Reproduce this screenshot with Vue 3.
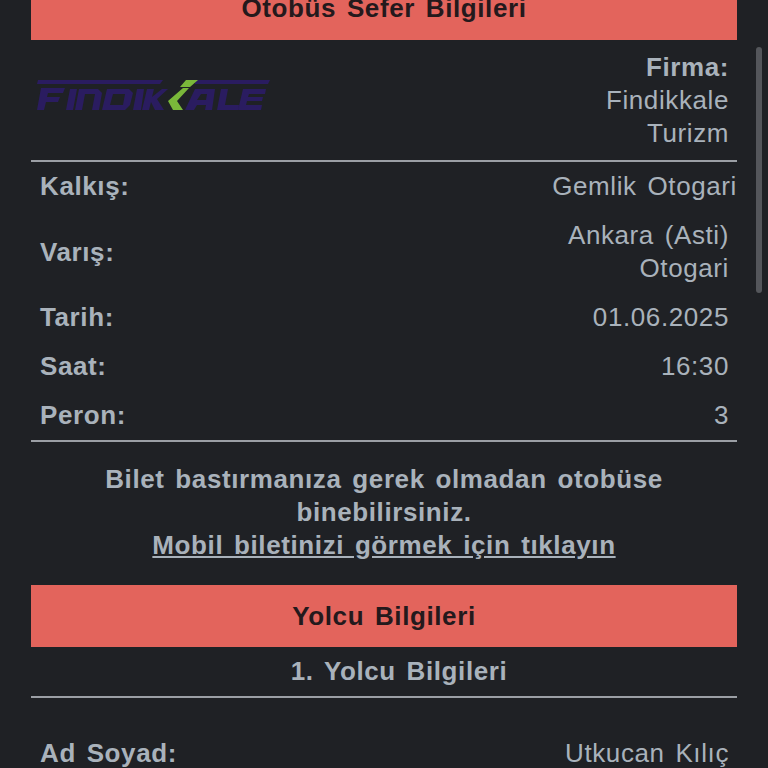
<script setup>
const rows = [
  { label: 'Kalkış:', value: ['Gemlik Otogari'], wide: true },
  { label: 'Varış:', value: ['Ankara (Asti)', 'Otogari'] },
  { label: 'Tarih:', value: ['01.06.2025'] },
  { label: 'Saat:', value: ['16:30'] },
  { label: 'Peron:', value: ['3'] },
]
</script>

<template>
  <div class="page">
    <main class="content">
      <h2 class="bar first">Otobüs Sefer Bilgileri</h2>

      <section class="company">
        <svg class="logo" viewBox="0 0 240 34" width="240" height="34" aria-label="Findikkale">
          <path fill="#2a1c60" d="M5 2h125l-3 4H4zM162 2h75l-2 4h-73z" />
          <path fill="#2a1c60" d="M8 10h24l-2 5H15l-1 4h13l-2 5H13l-2 8H4zM37 11h7l-4 21h-7zM46 11h19l4 4-3 17h-7l3-16H52l-3 16h-7zM74 11h22l4 4-3 12-5 5H69zm6 5-3 11h13l2-11zM104 11h7l-3 21h-8zM114 11h7l-2 8 10-8h6l-11 10 7 11h-9l-4-8-2 8h-7z" />
          <path fill="#2a1c60" d="M162 11h20l-3 21h-7l1-5h-9l-3 5h-9zm6 5-4 6h9l1-6zM188 11h7l-3 16h14l-1 5h-21zM210 11h23l-1 5h-16l-1 3h15l-1 4h-15l-1 4h16l-1 5h-23z" />
          <path fill="#7ab83a" d="M153 2h12l-8 7h-10zM150 10h6l-12 13 6 9h-10l-5-9z" />
        </svg>
        <div class="firm">
          <strong>Firma:</strong>
          <span>Findikkale</span>
          <span>Turizm</span>
        </div>
      </section>

      <section class="details">
        <div v-for="row in rows" :key="row.label" class="row">
          <strong>{{ row.label }}</strong>
          <div class="value" :class="{ wide: row.wide }">
            <span v-for="line in row.value" :key="line">{{ line }}</span>
          </div>
        </div>
      </section>

      <section class="notice">
        <p>Bilet bastırmanıza gerek olmadan otobüse<br />binebilirsiniz.</p>
        <a href="#">Mobil biletinizi görmek için tıklayın</a>
      </section>

      <h2 class="bar">Yolcu Bilgileri</h2>
      <h3 class="sub">1. Yolcu Bilgileri</h3>

      <div class="row passenger">
        <strong>Ad Soyad:</strong>
        <div class="value"><span>Utkucan Kılıç</span></div>
      </div>
    </main>
    <div class="scrollbar"></div>
  </div>
</template>

<style scoped>
.page {
  position: relative;
  height: 768px;
  overflow: hidden;
  background: #1f2125;
  padding-left: 31px;
  color: #a9b2bb;
  font-family: "Liberation Sans", Arial, sans-serif;
  font-size: 26px;
  line-height: 33px;
  letter-spacing: 0.6px;
  word-spacing: 3px;
}
.content {
  width: 706px;
  margin-top: -23px;
  display: flex;
  flex-direction: column;
}
.bar {
  margin: 0;
  height: 62px;
  background: #e3645c;
  color: #24191c;
  font-size: 26px;
  font-weight: 700;
  line-height: 62px;
  text-align: center;
}
.bar.first {
  height: 63px;
}
.company {
  height: 122px;
  box-sizing: border-box;
  padding: 10px 8px 10px 2px;
  display: flex;
  justify-content: space-between;
  align-items: center;
  border-bottom: 2px solid #9b9fa5;
}
.logo {
  flex: none;
  margin-top: -10px;
  filter: blur(0.7px);
}
.firm, .value {
  display: flex;
  flex-direction: column;
  align-items: flex-end;
  text-align: right;
}
.details {
  border-bottom: 2px solid #9b9fa5;
}
.row {
  display: flex;
  justify-content: space-between;
  align-items: center;
  padding: 8px 8px 8px 9px;
}
.value.wide {
  margin-right: -8px;
}
.notice {
  height: 143px;
  box-sizing: border-box;
  padding-top: 21px;
  text-align: center;
  font-weight: 700;
}
.notice p {
  margin: 0;
}
.notice a {
  color: inherit;
  text-decoration: underline;
}
.sub {
  margin: 0;
  height: 51px;
  box-sizing: border-box;
  padding-left: 30px;
  border-bottom: 2px solid #9b9fa5;
  font-size: 26px;
  font-weight: 700;
  line-height: 48px;
  text-align: center;
}
.passenger {
  margin-top: 31px;
}
.scrollbar {
  position: absolute;
  left: 756px;
  top: 47px;
  width: 6px;
  height: 246px;
  border-radius: 3px;
  background: #54565b;
}
</style>
<style>
html, body { margin: 0; background: #1f2125; }
</style>
